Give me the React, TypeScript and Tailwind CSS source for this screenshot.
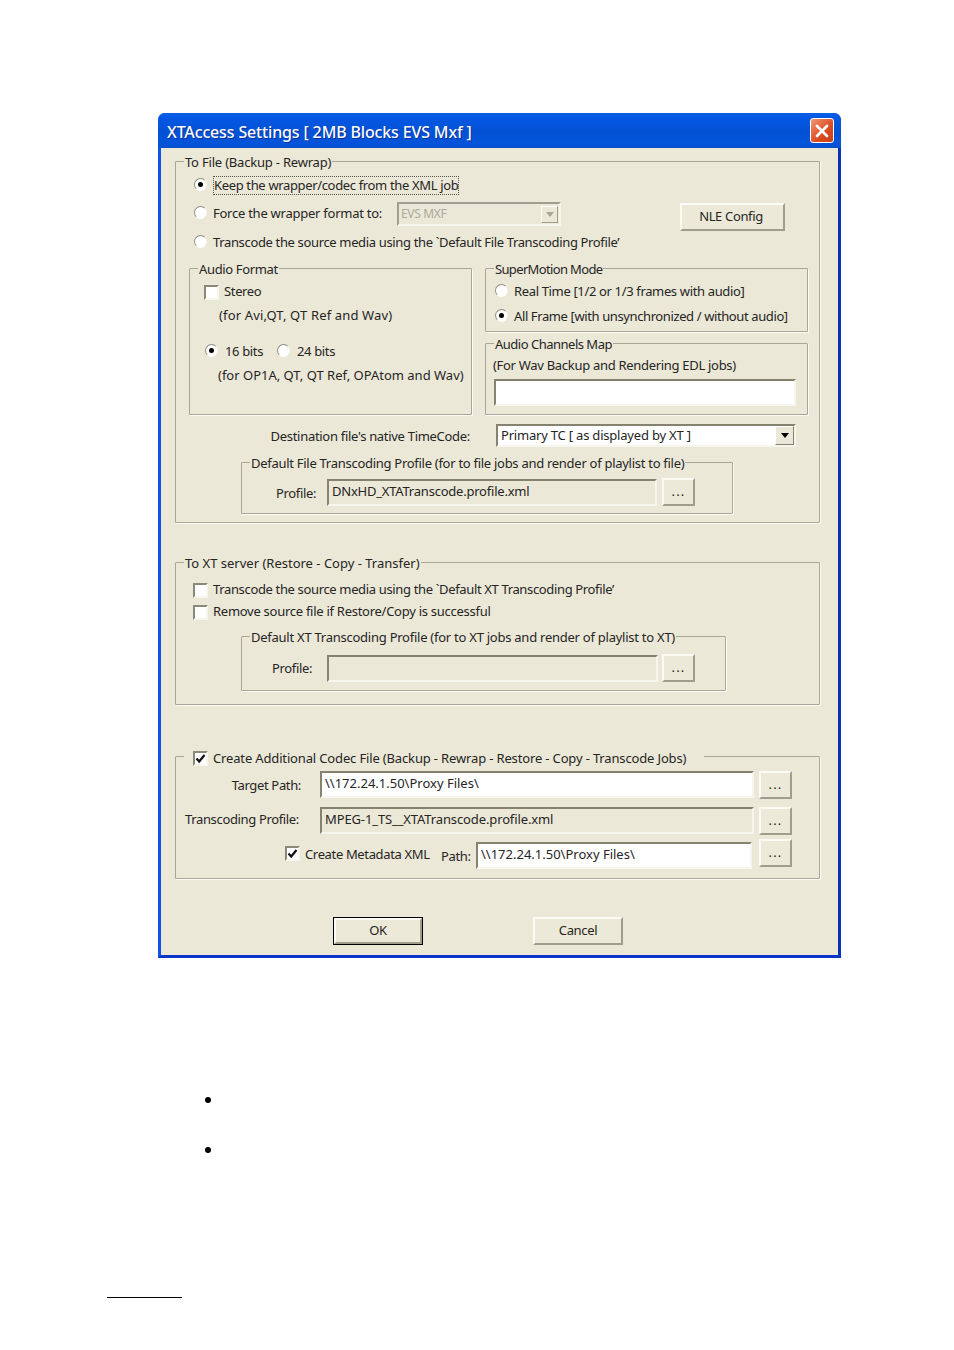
import React from "react";
import { X } from "lucide-react";

const Group: React.FC<{ legend: React.ReactNode; className?: string; inner?: string; children: React.ReactNode }> = ({
  legend,
  className = "",
  inner = "",
  children,
}) => (
  <fieldset className={`min-w-0 border border-[#a9a699] rounded-[1px] shadow-[1px_1px_0_#fbfaf4] ${className}`}>
    <legend className="ml-[8px] px-[1px] h-[14px] leading-[16px] whitespace-nowrap">{legend}</legend>
    <div className={`pt-[2px] ${inner}`}>{children}</div>
  </fieldset>
);

const Radio = ({ on = false }: { on?: boolean }) => (
  <span className="w-[13px] h-[13px] -mt-[3px] shrink-0 rounded-full bg-white border border-t-[#8f8d80] border-l-[#8f8d80] border-r-[#f4f3ec] border-b-white flex items-center justify-center">
    {on && <span className="w-[5px] h-[5px] rounded-full bg-black" />}
  </span>
);

const Checkbox = ({ on = false }: { on?: boolean }) => (
  <span className="w-[15px] h-[15px] shrink-0 bg-white border-2 border-t-[#8a8878] border-l-[#8a8878] border-r-[#f6f5ee] border-b-[#f6f5ee] flex items-center justify-center">
    {on && (
      <svg width="11" height="11" viewBox="0 0 11 11">
        <path d="M1.5 5.5 L4.2 8.5 L9.5 2" fill="none" stroke="#111" strokeWidth="2.2" />
      </svg>
    )}
  </span>
);

const Field = ({ value = "", className = "" }: { value?: string; className?: string }) => (
  <div className={`border-2 border-t-[#85836f] border-l-[#85836f] border-r-[#f6f5ee] border-b-[#f6f5ee] pl-[3px] flex items-center pb-[1px] whitespace-nowrap overflow-hidden ${className}`}>
    {value}
  </div>
);

const Btn = ({ label, className = "" }: { label: string; className?: string }) => (
  <div className={`border-2 border-t-[#fbfaf4] border-l-[#fbfaf4] border-r-[#a09d8c] border-b-[#a09d8c] bg-[#ece9d8] flex items-center justify-center shrink-0 ${className}`}>
    {label}
  </div>
);

const Dots = ({ className = "" }: { className?: string }) => (
  <Btn label="..." className={`w-[33px] h-[28px] tracking-[1.2px] ${className}`} />
);

export default function App() {
  return (
    <div className="w-[954px] h-[1350px] bg-white font-['Noto_Sans','Open_Sans',sans-serif] text-[13px] tracking-[-0.35px] text-[#26251f] pt-[113px] overflow-hidden">
      {/* XP dialog */}
      <div className="ml-[158px] w-[683px] h-[845px] flex flex-col rounded-t-[7px] bg-[#0a3fd8] overflow-hidden">
        <div className="h-[35px] shrink-0 flex items-center justify-between pl-[9px] pr-[7px] bg-[linear-gradient(180deg,#0a5fe6_0%,#0558e4_12%,#0352d4_55%,#0454da_88%,#0a50c8_100%)]">
          <span className="pt-[2px] text-white text-[16px] font-medium tracking-[-0.15px] [text-shadow:1px_1px_0_#0a2f9a] whitespace-nowrap">
            XTAccess Settings [ 2MB Blocks EVS Mxf ]
          </span>
          <div className="w-[24px] h-[25px] rounded-[3px] border border-white bg-[linear-gradient(135deg,#f09a78,#dc4a20_60%,#c8401c)] flex items-center justify-center">
            <X className="w-[20px] h-[20px] text-white" strokeWidth={3.2} />
          </div>
        </div>

        <div className="flex-1 border-l-[3px] border-l-[#0f52e8] border-r-[3px] border-r-[#0831b8] border-b-[3px] border-b-[#0a35c8] bg-[#ebe8d8] pl-[14px] pr-[18px] pt-[6px]">
          {/* To File */}
          <Group legend={<span className="tracking-[-0.2px]">To File (Backup - Rewrap)</span>} className="h-[369px]" inner="pl-[13px] pr-[10px]">
            <div className="h-[29px] mt-[1px] ml-[5px] flex items-center gap-[6px]">
              <Radio on />
              <span className="h-[19px] leading-[17px] border border-dotted border-[#55544c] whitespace-nowrap">Keep the wrapper/codec from the XML job</span>
            </div>
            <div className="h-[28px] ml-[5px] flex items-center">
              <Radio />
              <span className="ml-[6px] w-[184px] tracking-[-0.25px] whitespace-nowrap">Force the wrapper format to:</span>
              <div className="w-[164px] h-[24px] border-2 border-t-[#a09e90] border-l-[#a09e90] border-r-[#f6f5ee] border-b-[#f6f5ee] flex items-center justify-between pl-[2px] pr-[1px] text-[#acaa9c] text-[12px]">
                EVS MXF
                <span className="w-[17px] h-[17px] border border-t-white border-l-white border-r-[#a09d8c] border-b-[#a09d8c] flex items-center justify-center">
                  <span className="w-0 h-0 border-x-[4px] border-x-transparent border-t-[5px] border-t-[#a8a698]" />
                </span>
              </div>
              <Btn label="NLE Config" className="ml-[119px] w-[105px] h-[28px] mt-[5px] pr-[3px]" />
            </div>
            <div className="h-[28px] pt-[2px] ml-[5px] flex items-center gap-[6px] whitespace-nowrap">
              <Radio />
              <span>Transcode the source media using the `Default File Transcoding Profile’</span>
            </div>

            <div className="flex gap-[13px] mt-[5px] h-[154px]">
              <Group legend="Audio Format" className="w-[283px] h-[154px]" inner="pl-[14px]">
                <div className="h-[28px] pt-[2px] flex items-center gap-[5px]">
                  <Checkbox />
                  <span>Stereo</span>
                </div>
                <div className="h-[20px] pl-[15px] pt-[2px] tracking-[0.15px] flex items-center whitespace-nowrap">(for Avi,QT, QT Ref and Wav)</div>
                <div className="h-[28px] mt-[12px] pt-[2px] pl-[1px] flex items-center">
                  <Radio on />
                  <span className="ml-[7px] w-[52px]">16 bits</span>
                  <Radio />
                  <span className="ml-[7px]">24 bits</span>
                </div>
                <div className="h-[20px] pl-[14px] mt-[1px] tracking-[0px] flex items-center whitespace-nowrap">(for OP1A, QT, QT Ref, OPAtom and Wav)</div>
              </Group>
              <div className="w-[323px]">
                <Group legend={<span className="tracking-[-0.65px]">SuperMotion Mode</span>} className="h-[71px]" inner="pl-[9px]">
                  <div className="h-[28px] pt-[2px] flex items-center gap-[6px] whitespace-nowrap">
                    <Radio />
                    <span>Real Time [1/2 or 1/3 frames with audio]</span>
                  </div>
                  <div className="h-[20px] pt-[3px] flex items-center gap-[6px] tracking-[-0.39px] whitespace-nowrap">
                    <Radio on />
                    <span>All Frame [with unsynchronized / without audio]</span>
                  </div>
                </Group>
                <Group legend={<span className="tracking-[-0.5px]">Audio Channels Map</span>} className="h-[79px] mt-[4px]" inner="pl-[7px]">
                  <div className="h-[22px] pt-[6px] tracking-[-0.3px] flex items-center whitespace-nowrap">(For Wav Backup and Rendering EDL jobs)</div>
                  <Field className="ml-[1px] w-[302px] h-[27px] mt-[5px] bg-white" />
                </Group>
              </div>
            </div>

            <div className="flex items-center mt-[9px] h-[23px]">
              <span className="w-[281px] pt-[2px] tracking-[-0.3px] text-right whitespace-nowrap">Destination file's native TimeCode:</span>
              <div className="ml-[26px] w-[300px] h-[23px] border-2 border-t-[#85836f] border-l-[#85836f] border-r-[#f6f5ee] border-b-[#f6f5ee] bg-white flex items-center justify-between pl-[3px] tracking-[-0.2px] whitespace-nowrap">
                Primary TC [ as displayed by XT ]
                <span className="w-[19px] h-[19px] bg-[#ebe8d8] border border-t-white border-l-white border-r-[#85836f] border-b-[#85836f] flex items-center justify-center">
                  <span className="w-0 h-0 border-x-[4px] border-x-transparent border-t-[5px] border-t-black" />
                </span>
              </div>
            </div>

            <Group
              legend={<span className="tracking-[-0.28px]">Default File Transcoding Profile (for to file jobs and render of playlist to file)</span>}
              className="ml-[52px] mt-[8px] w-[492px] h-[59px]"
              inner="pl-[34px]"
            >
              <div className="flex items-center mt-[7px]">
                <span className="w-[42px] mr-[9px] pt-[3px] whitespace-nowrap">Profile:</span>
                <Field value="DNxHD_XTATranscode.profile.xml" className="w-[330px] h-[27px] tracking-[-0.22px]" />
                <Dots className="ml-[5px] w-[32px]" />
              </div>
            </Group>
          </Group>

          {/* To XT server */}
          <Group legend={<span className="tracking-[0px]">To XT server (Restore - Copy - Transfer)</span>} className="h-[150px] mt-[32px]" inner="pl-[17px]">
            <div className="h-[22px] mt-[8px] flex items-center gap-[5px] whitespace-nowrap">
              <Checkbox />
              <span>Transcode the source media using the `Default XT Transcoding Profile’</span>
            </div>
            <div className="h-[22px] flex items-center gap-[5px] tracking-[-0.27px] whitespace-nowrap">
              <Checkbox />
              <span>Remove source file if Restore/Copy is successful</span>
            </div>
            <Group
              legend={<span className="tracking-[-0.25px]">Default XT Transcoding Profile (for to XT jobs and render of playlist to XT)</span>}
              className="ml-[48px] mt-[6px] w-[485px] h-[62px]"
              inner="pl-[30px]"
            >
              <div className="flex items-center mt-[10px]">
                <span className="w-[42px] mr-[13px] whitespace-nowrap">Profile:</span>
                <Field className="w-[331px] h-[27px]" />
                <Dots className="ml-[4px] w-[32px] -mt-[1px]" />
              </div>
            </Group>
          </Group>

          {/* Additional codec */}
          <Group
            legend={
              <span className="flex items-center gap-[5px] w-[518px] pl-[8px] pt-[1px] tracking-[-0.15px]">
                <Checkbox on />
                <span>Create Additional Codec File (Backup - Rewrap - Restore - Copy - Transcode Jobs)</span>
              </span>
            }
            className="h-[130px] mt-[44px]"
            inner="pl-[9px]"
          >
            <div className="flex items-center h-[27px] mt-[6px]">
              <span className="w-[116px] pt-[2px] text-right whitespace-nowrap">Target Path:</span>
              <Field value="\\172.24.1.50\Proxy Files\" className="ml-[19px] w-[434px] h-[27px] bg-white tracking-[0px]" />
              <Dots className="ml-[5px] w-[32px]" />
            </div>
            <div className="flex items-center h-[27px] mt-[9px]">
              <span className="w-[135px] pb-[1px] whitespace-nowrap">Transcoding Profile:</span>
              <Field value="MPEG-1_TS__XTATranscode.profile.xml" className="w-[434px] h-[27px] tracking-[-0.12px]" />
              <Dots className="ml-[5px] w-[32px]" />
            </div>
            <div className="flex items-center h-[27px] mt-[6px]">
              <span className="ml-[100px]"><Checkbox on /></span>
              <span className="ml-[5px] w-[136px] pt-[3px] whitespace-nowrap">Create Metadata XML</span>
              <span className="w-[35px] pt-[6px] whitespace-nowrap">Path:</span>
              <Field value="\\172.24.1.50\Proxy Files\" className="w-[276px] h-[27px] mt-[3px] bg-white tracking-[0px]" />
              <Dots className="ml-[7px] w-[32px] -mt-[1px]" />
            </div>
          </Group>

          {/* Dialog buttons */}
          <div className="flex mt-[38px] pl-[158px] gap-[110px]">
            <div className="w-[90px] h-[28px] border border-black">
              <Btn label="OK" className="w-full h-full" />
            </div>
            <Btn label="Cancel" className="w-[90px] h-[28px]" />
          </div>
        </div>
      </div>

      {/* Page behind the screenshot: empty bullets and footnote rule */}
      <div className="ml-[205px] mt-[139px] flex flex-col gap-[44px]">
        <span className="w-[6px] h-[6px] rounded-full bg-black" />
        <span className="w-[6px] h-[6px] rounded-full bg-black" />
      </div>
      <div className="ml-[107px] mt-[144px] w-[75px] h-px bg-black" />
    </div>
  );
}
